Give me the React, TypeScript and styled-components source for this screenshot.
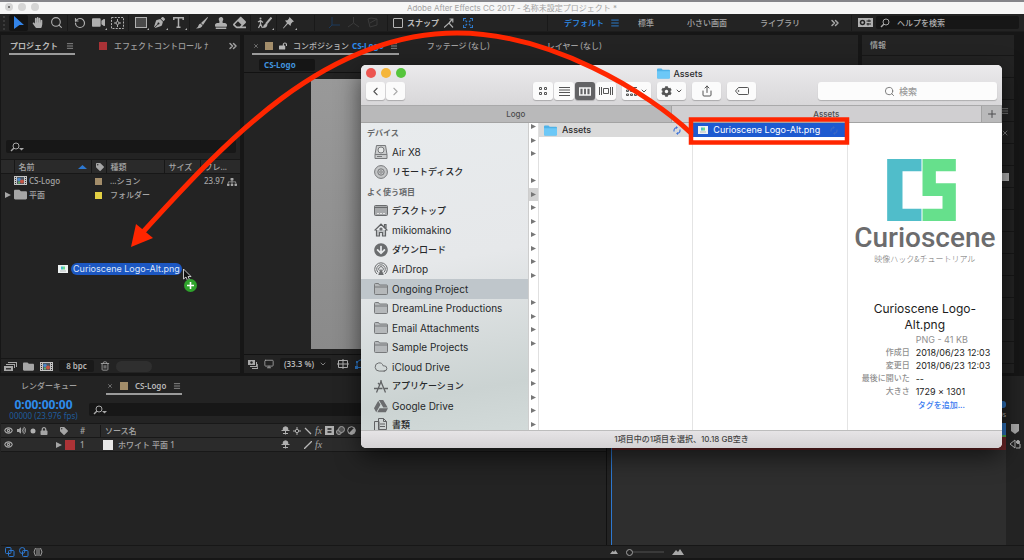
import React from "react";
import styled, { createGlobalStyle, css } from "styled-components";
import {
  FaHandPaper,
  FaVideo,
  FaPenNib,
  FaStamp,
  FaEraser,
  FaTag,
  FaFolder,
  FaLock,
  FaLockOpen,
  FaVolumeUp,
  FaArrowCircleDown,
  FaGoogleDrive,
  FaSitemap,
  FaCog,
} from "react-icons/fa";
import {
  Search,
  RotateCcw,
  ChevronLeft,
  ChevronRight,
  ChevronDown,
  ChevronsRight,
  Share,
  Trash2,
  Monitor,
  Cloud,
  Menu,
  Plus,
  X,
  Eye,
} from "lucide-react";

const UI = `"Noto Sans", "Noto Sans CJK JP", sans-serif`;
const MAC = `Inter, "Noto Sans CJK JP", sans-serif`;

const Global = createGlobalStyle`
  * { box-sizing: border-box; }
  body { margin: 0; background: #161616; }
  button, input { font: inherit; color: inherit; margin: 0; padding: 0; border: 0; background: none; }
  button { display: inline-flex; align-items: center; justify-content: center; }
  input:focus { outline: none; }
  svg { display: block; flex: none; }
  h1, h2, p, ul, dl, dd { margin: 0; padding: 0; }
  ul { list-style: none; }
`;

/* ---------- Application frame ---------- */

const Shell = styled.div`
  position: relative;
  display: flex;
  flex-direction: column;
  height: 100vh;
  min-height: 560px;
  padding-bottom: 2px;
  border-top: 2px solid #85858a;
  background: #161616;
  color: #a6a6a6;
  font: 8px/12px ${UI};
  overflow: hidden;
  white-space: nowrap;
`;

const TitleBar = styled.header`
  position: relative;
  display: flex;
  align-items: center;
  justify-content: center;
  height: 12px;
  flex: none;
  background: #f6f6f6;
  color: #a2a2a2;
  font: 8px/12px ${MAC};
`;

const WindowDots = styled.div`
  position: absolute;
  left: 5px;
  top: 1px;
  display: flex;
  gap: 5px;
`;

const IdleDot = styled.button`
  width: 8px;
  height: 8px;
  border-radius: 50%;
  background: #d5d5d5;
  i {
    width: 2px;
    height: 2px;
    border-radius: 50%;
    background: #555;
  }
`;

const Toolbar = styled.div`
  display: flex;
  align-items: center;
  height: 18px;
  flex: none;
  margin-bottom: 3px;
  padding: 0 5px 0 3px;
  background: #232323;
  border-bottom: 1px solid #1c1c1c;
`;

const Grip = styled.span`
  width: 2px;
  height: 14px;
  margin-right: 4px;
  border-left: 2px dotted #3a3a3a;
`;

const ToolButton = styled.button<{ $active?: boolean; $dim?: boolean; $width?: number; $more?: boolean }>`
  position: relative;
  width: ${(p) => p.$width ?? 19}px;
  height: 16px;
  border-radius: 2px;
  color: ${(p) => (p.$dim ? "#3b3b3b" : "#b0b0b0")};
  background: ${(p) => (p.$active ? "#141414" : "transparent")};
  ${(p) =>
    p.$more &&
    css`
      &::after {
        content: "";
        position: absolute;
        right: 1px;
        bottom: 1px;
        border: 1px solid;
        border-color: transparent #b0b0b0 #b0b0b0 transparent;
      }
    `}
`;

const Divider = styled.span<{ $before?: number; $after?: number }>`
  width: 1px;
  height: 16px;
  margin: 0 ${(p) => p.$after ?? 2}px 0 ${(p) => p.$before ?? 1}px;
  background: #191919;
`;

const SnapLabel = styled.label`
  display: flex;
  align-items: center;
  gap: 4px;
  margin-left: 5px;
  color: #bdbdbd;
  font-weight: 600;
  input {
    appearance: none;
    width: 10px;
    height: 10px;
    border: 1px solid #b5b5b5;
    border-radius: 1px;
  }
`;

const Workspaces = styled.nav`
  display: grid;
  grid-template-columns: 46px 28px 49px 73px 69px auto;
  align-items: center;
  flex: 1;
  padding-left: 16px;
`;

const Workspace = styled.button<{ $on?: boolean }>`
  justify-content: flex-start;
  font-weight: 500;
  color: ${(p) => (p.$on ? "#2d8ceb" : "#a6a6a6")};
`;

const HelpSearch = styled.label`
  display: flex;
  align-items: center;
  gap: 7px;
  width: 143px;
  height: 13px;
  padding-left: 4px;
  border-radius: 2px;
  background: #161616;
  input {
    flex: 1;
    min-width: 0;
    height: 12px;
    font-weight: 500;
  }
  input::placeholder {
    color: #b0b0b0;
    opacity: 1;
  }
`;

const Main = styled.div`
  display: grid;
  grid-template-columns: 239px minmax(0, 1fr) 152px;
  gap: 4px;
  flex: 1;
  min-height: 0;
  padding: 0 10px 0 1px;
  margin-bottom: 3px;
`;

const Panel = styled.section`
  display: flex;
  flex-direction: column;
  min-width: 0;
  background: #232323;
`;

const TabStrip = styled.div`
  display: flex;
  align-items: stretch;
  height: 20px;
  flex: none;
  padding-left: 8px;
`;

const Tab = styled.button<{ $active?: boolean; $gap?: number }>`
  gap: ${(p) => p.$gap ?? 7}px;
  height: 20px;
  padding: 3px 1px 0;
  white-space: pre;
  color: ${(p) => (p.$active ? "#b8b8b8" : "#a0a0a0")};
  font-weight: ${(p) => (p.$active ? 600 : 500)};
  border-bottom: 2px solid ${(p) => (p.$active ? "#9b9b9b" : "transparent")};
  b {
    color: #2d8ceb;
    margin-left: -3px;
  }
`;

const CompTab = styled(Tab)`
  font-weight: 500;
`;

const Swatch = styled.i<{ $color: string; $size?: number }>`
  display: inline-block;
  flex: none;
  width: ${(p) => p.$size ?? 8}px;
  height: ${(p) => p.$size ?? 8}px;
  background: ${(p) => p.$color};
  vertical-align: middle;
`;

/* ---------- Project panel ---------- */

const SearchField = styled.label`
  display: flex;
  align-items: center;
  height: 13px;
  padding-left: 4px;
  background: #171717;
  border-radius: 2px;
  input {
    flex: 1;
    min-width: 0;
    height: 10px;
  }
`;

const ProjectSearch = styled(SearchField)`
  margin: 85px 4px 7px 5px;
`;

const ProjectTable = styled.table`
  width: 100%;
  table-layout: fixed;
  border-collapse: collapse;
  margin-top: -1px;
  th,
  td {
    height: 14px;
    padding: 0 0 0 4px;
    line-height: 12px;
    font-weight: 500;
    text-align: left;
    overflow: hidden;
  }
  th {
    background: #2a2a2a;
    border: solid #171717;
    border-width: 1px 1px 1px 0;
  }
  th:first-child {
    padding: 0;
  }
  td:nth-child(2) {
    padding: 0;
  }
  td:last-child svg {
    display: inline-block;
    vertical-align: middle;
  }
`;

const NameCell = styled.span`
  display: flex;
  align-items: center;
  justify-content: space-between;
  padding-right: 4px;
`;

const ItemName = styled.span`
  display: flex;
  align-items: center;
  gap: 2px;
`;

const PanelFooter = styled.footer`
  display: flex;
  align-items: center;
  height: 15px;
  flex: none;
  margin-top: auto;
  gap: 6px;
  padding-left: 3px;
  border-top: 1px solid #161616;
`;

const ValueButton = styled.button<{ $width: number }>`
  width: ${(p) => p.$width}px;
  height: 12px;
  gap: 5px;
  border-radius: 2px;
  background: #191919;
  color: #b5b5b5;
  font-weight: 600;
`;

const ScrollPill = styled.span`
  width: 36px;
  height: 11px;
  border-radius: 6px;
  background: #2f2f2f;
`;

/* ---------- Composition panel ---------- */

const Crumbs = styled.div`
  height: 18px;
  flex: none;
  padding: 4px 0 0 15px;
  border-bottom: 1px solid #121212;
`;

const Crumb = styled.button`
  justify-content: flex-start;
  width: 56px;
  height: 12px;
  padding-left: 5px;
  border-radius: 2px;
  background: #151515;
  color: #4193dd;
  font-weight: 700;
`;

const Viewer = styled.div`
  flex: 1;
  min-height: 0;
  padding: 6px 67px 5px;
  border-bottom: 1px solid #121212;
`;

const Footage = styled.div`
  height: 100%;
  background: linear-gradient(#999, #8a8a8a);
`;

const CompFooter = styled.footer`
  display: flex;
  align-items: center;
  flex: none;
  height: 18px;
  gap: 6px;
  padding-left: 4px;
`;

/* ---------- Side panels ---------- */

const SideList = styled.div`
  display: grid;
  grid-template-rows: 21px repeat(auto-fill, 22px);
  flex: 1;
`;

const SideTitle = styled.h2`
  padding-left: 8px;
  border-bottom: 1px solid #171717;
  font: 500 8px/20px ${UI};
`;

const SideItem = styled.div`
  display: flex;
  align-items: center;
  justify-content: flex-end;
  padding-right: 5px;
  border-bottom: 1px solid #171717;
`;

/* ---------- Timeline ---------- */

const Timeline = styled.section`
  display: grid;
  grid-template-columns: minmax(0, 1fr) 400px 18px;
  grid-template-rows: 19px 28px minmax(0, 1fr) 13px;
  flex: none;
  height: 182px;
  padding-left: 1px;
  background: #232323;
`;

const TimelineTabs = styled(TabStrip)`
  grid-column: 1 / -1;
  gap: 28px;
  height: 19px;
  padding-left: 19px;
  button {
    height: 19px;
  }
`;

const TimeRow = styled.div`
  display: flex;
  gap: 10px;
  padding: 4px 0 0 7px;
`;

const TimeCode = styled.div`
  width: 71px;
  color: #1f5c9c;
  line-height: 10px;
  text-align: center;
  strong {
    display: block;
    color: #2d8ceb;
    font-size: 12px;
    line-height: 12px;
  }
`;

const TimelineSearch = styled(SearchField)`
  flex: 1;
  margin-top: 4px;
`;

const Ruler = styled.div`
  display: flex;
  flex-direction: column;
  align-items: flex-end;
  font-size: 7px;
  line-height: 14px;
  padding-top: 6px;
  span {
    width: 100%;
    height: 7px;
    border-radius: 3px;
    background: #2d6fb8;
  }
`;

const LayerTable = styled.table`
  align-self: start;
  width: 100%;
  table-layout: fixed;
  border-collapse: collapse;
  th,
  td {
    height: 14px;
    padding: 0;
    font-weight: 500;
    line-height: 12px;
    text-align: left;
    border-bottom: 1px solid #181818;
    background: #2b2b2b;
    overflow: hidden;
  }
  th {
    border-top: 1px solid #181818;
  }
  svg {
    margin: 0 auto;
  }
`;

const LabelCell = styled.span`
  display: flex;
  align-items: center;
  gap: 3px;
  padding-left: 6px;
  svg {
    margin: 0;
  }
`;

const SourceCell = styled.span<{ $sep?: boolean }>`
  display: flex;
  align-items: center;
  gap: 5px;
  padding-left: ${(p) => (p.$sep ? 4 : 2)}px;
  border-left: 1px solid ${(p) => (p.$sep ? "#181818" : "transparent")};
`;

const Tracks = styled.div`
  border-left: 1px solid #111;
  background: #232323;
  padding-left: 4px;
`;

const TrackArea = styled.div`
  height: 100%;
  border-left: 1px solid #2d78d0;
  background: #2e2e2e;
`;

const TrackHead = styled.div`
  height: 14px;
  background: #2d6fb8;
  border-bottom: 2px solid #4aa84a;
`;

const LayerBar = styled.div`
  height: 13px;
  background: #6b2628;
`;

const Gutter = styled.div`
  display: flex;
  flex-direction: column;
  align-items: center;
  gap: 5px;
  padding-top: 1px;
`;

const TimelineFooter = styled.footer`
  display: flex;
  align-items: center;
  gap: 4px;
  padding-left: 4px;
  border-top: 1px solid #171717;
`;

const ZoomSlider = styled.input`
  appearance: none;
  && {
    width: 38px;
    height: 8px;
    margin: 0 4px;
    background: linear-gradient(#3a3a3a, #3a3a3a) center / 100% 2px no-repeat;
  }
  &::-webkit-slider-thumb {
    appearance: none;
    width: 7px;
    height: 7px;
    border: 1px solid #a0a0a0;
    border-radius: 50%;
    background: #232323;
  }
`;

/* ---------- Finder window ---------- */

const FinderFrame = styled.div`
  position: absolute;
  left: 361px;
  right: 22px;
  top: 63px;
  border-radius: 5px;
  box-shadow: 0 8px 24px rgba(0, 0, 0, 0.6);
`;

const Finder = styled.section`
  display: flex;
  flex-direction: column;
  height: 383px;
  border-radius: 5px;
  overflow: hidden;
  background: #fff;
  color: #2b2b2d;
  font: 500 9px/12px ${MAC};
`;

const FinderHead = styled.header`
  height: 41px;
  flex: none;
  padding: 0 5px;
  background: linear-gradient(#ebeaec, #d8d7d9);
  border-bottom: 1px solid #a9a9aa;
`;

const FinderTitle = styled.div`
  display: flex;
  align-items: center;
  justify-content: center;
  position: relative;
  height: 17px;
  gap: 3px;
  padding-right: 3px;
  h1 {
    font: 500 9px/16px ${MAC};
  }
`;

const Lights = styled.div`
  position: absolute;
  left: 0;
  top: 3px;
  display: flex;
  gap: 5px;
`;

const Light = styled.button<{ $color: string }>`
  width: 10px;
  height: 10px;
  border-radius: 50%;
  background: ${(p) => p.$color};
`;

const FinderTools = styled.div`
  display: flex;
  align-items: center;
  gap: 6px;
  height: 18px;
`;

const PushButton = styled.button<{ $on?: boolean; $width?: number }>`
  gap: 3px;
  width: ${(p) => p.$width ?? 29}px;
  height: 18px;
  border-radius: 3px;
  background: ${(p) => (p.$on ? "#636365" : "#fbfbfb")};
  box-shadow: 0 1px 1px rgba(0, 0, 0, 0.22);
  color: ${(p) => (p.$on ? "#f4f4f4" : "#555")};
`;

const Segments = styled.div<{ $left?: number }>`
  display: flex;
  gap: 1px;
  margin-left: ${(p) => p.$left ?? 0}px;
`;

const FinderSearch = styled.label`
  display: flex;
  align-items: center;
  justify-content: center;
  gap: 4px;
  width: 179px;
  height: 18px;
  margin-left: auto;
  border-radius: 3px;
  background: #fcfcfc;
  box-shadow: 0 1px 1px rgba(0, 0, 0, 0.2);
  color: #777;
  input {
    width: 32px;
    height: 14px;
  }
  input::placeholder {
    color: #9b9b9b;
    opacity: 1;
  }
`;

const FinderTabs = styled.div`
  display: grid;
  grid-template-columns: 1fr 1fr 20px;
  height: 17px;
  flex: none;
  border-bottom: 1px solid #a3a3a3;
`;

const FinderTab = styled.button<{ $active?: boolean }>`
  background: ${(p) => (p.$active ? "#d0cfd1" : "#b9b9ba")};
  border-right: 1px solid #a3a3a3;
  color: #4c4c4e;
  font-size: 8px;
`;

const FinderBody = styled.div`
  display: grid;
  grid-template-columns: 168px 10px repeat(3, minmax(0, 1fr));
  flex: 1;
  min-height: 0;
`;

const Sidebar = styled.nav`
  overflow: hidden;
  background: linear-gradient(170deg, #e8ebed, #e6e8ea 45%, #cbd3d2 85%, #d2dad9);
  border-right: 1px solid #cdcdcd;
  h2 {
    padding: 3px 0 2px 6px;
    font: 600 8px/14px ${MAC};
    color: #66686a;
  }
`;

const Places = styled.ul<{ $rows: number; $height: number }>`
  display: grid;
  grid-template-rows: repeat(${(p) => p.$rows}, 1fr);
  height: ${(p) => p.$height}px;
`;

const Place = styled.li<{ $on?: boolean; $latin?: boolean }>`
  display: flex;
  background: ${(p) => (p.$on ? "#bfc6cb" : "transparent")};
  a {
    display: flex;
    align-items: center;
    flex: 1;
    gap: 4px;
    padding-left: 13px;
    color: #26282a;
    text-decoration: none;
    ${(p) => p.$latin && `font: 400 10px/12px Inter, sans-serif;`}
  }
  svg {
    color: #6a6c6e;
  }
`;

const Arrows = styled.div`
  display: flex;
  flex-direction: column;
  justify-content: flex-end;
  overflow: hidden;
  border-right: 1px solid #e0e0e0;
`;

const ArrowGrid = styled.ul`
  display: grid;
  grid-template-rows: repeat(23, 1fr);
  flex: none;
  height: 311px;
  margin-bottom: -1px;
`;

const ArrowRow = styled.li<{ $on?: boolean }>`
  display: flex;
  align-items: center;
  justify-content: center;
  background: ${(p) => (p.$on ? "#d2d2d2" : "transparent")};
  color: #777;
`;

const Column = styled.div`
  border-right: 1px solid #e4e4e4;
`;

const FileRow = styled.button<{ $selected?: boolean }>`
  display: flex;
  justify-content: flex-start;
  width: 100%;
  height: 14px;
  padding: 0 11px 0 5px;
  gap: 5px;
  background: ${(p) => (p.$selected ? "#1d5ad0" : "#dadada")};
  color: ${(p) => (p.$selected ? "#fff" : "#2b2b2d")};
  font-weight: ${(p) => (p.$selected ? 400 : 500)};
  svg:last-child {
    color: ${(p) => (p.$selected ? "#3a68c4" : "#3f74d8")};
  }
`;

const Spring = styled.span`
  flex: 1;
`;

const Preview = styled.article`
  display: flex;
  flex-direction: column;
  align-items: center;
  padding-top: 36px;
  > svg {
    margin-right: 6px;
  }
`;

const Wordmark = styled.p`
  margin-top: 2px;
  color: #6c6c6d;
  font: 500 28px/30px Roboto, sans-serif;
`;

const Tagline = styled.p`
  margin-bottom: 37px;
  color: #6c6c6c;
  font: 300 8px/11px "Noto Sans CJK JP", sans-serif;
`;

const FileTitle = styled.h2`
  white-space: normal;
  width: 120px;
  text-align: center;
  color: #1c1c1c;
  font: 400 12px/16px ${MAC};
`;

const Meta = styled.dl`
  display: grid;
  grid-template-columns: 62px 1fr;
  column-gap: 6px;
  width: 100%;
  font-weight: 400;
  line-height: 13px;
  dt {
    color: #8f8f8f;
    font-size: 8px;
    font-weight: 500;
    text-align: right;
  }
  dd {
    color: #222;
  }
  a {
    padding-left: 2px;
    color: #3a7cf0;
    font-size: 8px;
    font-weight: 500;
    text-decoration: none;
  }
`;

const Kind = styled.dd`
  grid-column: 2;
  && {
    color: #8f8f8f;
  }
`;

const StatusBar = styled.footer`
  height: 18px;
  flex: none;
  border-top: 1px solid #bdbdbd;
  background: linear-gradient(#e6e4e6, #d4d2d4);
  color: #444;
  font: 500 8px/17px ${MAC};
  text-align: center;
`;

/* ---------- Annotations and drag feedback ---------- */

const ArrowLayer = styled.svg`
  position: absolute;
  left: 0;
  top: -2px;
  pointer-events: none;
`;

const DragGhost = styled.div`
  position: absolute;
  left: 58px;
  top: 261px;
  display: flex;
  align-items: center;
  gap: 3px;
  font: 400 9px/12px ${MAC};
  color: #dde6f8;
  span {
    padding: 0 2px;
    border-radius: 6px;
    background: #1c57c2;
  }
`;

const DragCursor = styled.svg`
  position: absolute;
  left: 182px;
  top: 266px;
`;

/* ---------- Drawings ---------- */

const Caret = ({ size = 6 }: { size?: number }) => (
  <svg width={size} height={size} viewBox="0 0 6 6" fill="currentColor">
    <path d="M0 0 L6 3 L0 6Z" />
  </svg>
);

const Finding = ({ menu = true }: { menu?: boolean }) => (
  <svg width={menu ? 15 : 10} height="10" viewBox={menu ? "0 0 15 10" : "0 0 10 10"} fill="none" stroke="#a8a8a8">
    <circle cx="6" cy="4" r="3" />
    <path d="M4 6 L1 9" strokeWidth="1.4" />
    {menu && <path d="M9 6 h5 l-2.500 2.500Z" fill="#a8a8a8" stroke="none" />}
  </svg>
);

const CompIcon = () => (
  <svg width="13" height="9" viewBox="0 0 13 9">
    <rect width="13" height="9" fill="#c4c4c4" />
    <rect x="3" y="1" width="7" height="7" fill="#4b5560" />
    <circle cx="5" cy="3.500" r="1.800" fill="#4a86c8" />
    <circle cx="8" cy="5.500" r="2" fill="#c45544" />
    <rect x="4" y="5.500" width="2" height="2" fill="#62b06a" />
    <path d="M1.500 1 V8 M11.500 1 V8" stroke="#333" strokeDasharray="1 1" />
  </svg>
);

const FootageStack = () => (
  <svg width="13" height="9" viewBox="0 0 13 9" fill="#a8a8a8">
    <path d="M4 0 H13 V5 H12 V1 H4Z M2 2 H11 V6 H10 V3 H2Z" />
    <path d="M0 4 H9 V9 H0Z" />
    <path d="M2 6 H7 V7.500 H2Z" fill="#333" />
  </svg>
);

const Snapshots = () => (
  <svg width="10" height="9" viewBox="0 0 10 9" fill="#a8a8a8">
    <path d="M0 0 H7 V5 H0Z M8 2 H9 V7 H2 V6 H8Z M9.200 4 H10 V9 H4 V8 H9.200Z" />
    <circle cx="3.500" cy="2.500" r="1.200" fill="#232323" />
  </svg>
);

const BlueFolder = () => (
  <svg width="13" height="11" viewBox="0 0 13 11">
    <path d="M0 1.500 Q0 .5 1 .5 H4.500 L5.700 1.700 H12 Q13 1.700 13 2.700 V9.500 Q13 10.500 12 10.500 H1 Q0 10.500 0 9.500Z" fill="#4fb2e8" />
    <path d="M0 3.200 H13 V9.500 Q13 10.500 12 10.500 H1 Q0 10.500 0 9.500Z" fill="#6cc8f7" />
  </svg>
);

const GrayFolder = () => (
  <svg width="14" height="12" viewBox="0 0 14 12" fill="#b5b8ba" stroke="#77797b">
    <path d="M.5 1.500 Q.5 .5 1.500 .5 H4.500 L5.500 2 H12.500 Q13.500 2 13.500 3 V10.500 Q13.500 11.500 12.500 11.500 H1.500 Q.5 11.500 .5 10.500Z M.5 4 H13.500" />
  </svg>
);

const Thumb = () => (
  <svg width="10" height="8" viewBox="0 0 10 8">
    <rect width="10" height="8" fill="#eef2f2" />
    <rect x="3" y="1.500" width="2" height="3" fill="#4bbcc9" />
    <rect x="5" y="1.500" width="2" height="3" fill="#66e08c" />
    <rect x="2" y="5.500" width="6" height="1" fill="#b8bcbc" />
  </svg>
);

const Sync = () => (
  <svg width="8" height="9" viewBox="0 0 8 9" fill="none" stroke="currentColor" strokeWidth="1.200">
    <path d="M1 5.500 V4.500 A3 3 0 0 1 4 1.500 M7 3.500 V4.500 A3 3 0 0 1 4 7.500" />
    <path d="M3 0 L5 1.500 L3 3Z M5 6 L3 7.500 L5 9Z" fill="currentColor" stroke="none" />
  </svg>
);

const Drive = () => (
  <svg width="14" height="14" viewBox="0 0 14 14" fill="#c9cbcc" stroke="#77797b">
    <path d="M2.500 .5 H11.500 L13 9.500 V13.500 H1 V9.500Z M1 9.500 H13" />
    <circle cx="7" cy="5" r="3" fill="#e6e8e8" />
    <path d="M3 11.500 H8" />
  </svg>
);

const Disc = () => (
  <svg width="14" height="14" viewBox="0 0 14 14" fill="#c4c6c7" stroke="#77797b">
    <circle cx="7" cy="7" r="6.400" />
    <circle cx="7" cy="7" r="3.200" />
    <circle cx="7" cy="7" r="1.200" fill="#eee" />
  </svg>
);

const Desktop = () => (
  <svg width="14" height="11" viewBox="0 0 14 11" fill="#a7a9ab" stroke="#696b6d">
    <rect x=".5" y=".5" width="13" height="10" rx="1" />
    <path d="M1 2.500 H13" />
    <path d="M3 8.500 H11" stroke="#e5e5e5" strokeDasharray="2 1" />
  </svg>
);

const House = () => (
  <svg width="14" height="14" viewBox="0 0 14 14" fill="none" stroke="#616365" strokeWidth="1.200">
    <path d="M.6 7.500 L7 1.200 L13.400 7.500 M10.500 4 V1.500 H12 V6" />
    <path d="M2.500 7 V13 H5.500 V9.500 H8.500 V13 H11.500 V7" fill="#c0c3c5" />
    <circle cx="7" cy="6" r="1" />
  </svg>
);

const AirDrop = () => (
  <svg width="14" height="14" viewBox="0 0 14 14" fill="none" stroke="#6a6c6e">
    <path d="M3 12 A6.300 6.300 0 1 1 11 12 M4.200 10.400 A4.300 4.300 0 1 1 9.800 10.400 M5.500 8.700 A2.300 2.300 0 1 1 8.500 8.700" />
    <path d="M7 6.500 L9.800 13 H4.200Z" fill="#6a6c6e" stroke="none" />
  </svg>
);

const Apps = () => (
  <svg width="14" height="13" viewBox="0 0 14 13" fill="none" stroke="#616365" strokeWidth="1.300">
    <path d="M7.500 .5 L2.500 12.500 M6.500 .5 L11.500 12.500 M0 8.500 H8.500 M10.500 8.500 H14 M4 3 L6 5" />
  </svg>
);

const Documents = () => (
  <svg width="14" height="14" viewBox="0 0 14 14" fill="#cdd3d3" stroke="#616365">
    <path d="M.5 3.500 H5 V13.500 H.5Z M4.500 .5 H9.500 L12.500 3.500 V11.500 H4.500Z M9.500 .5 V3.500 H12.500 M6 6 H11 M6 8.500 H11" />
  </svg>
);

const Sun = () => (
  <svg width="8" height="8" viewBox="0 0 8 8" fill="none" stroke="#b0b0b0">
    <circle cx="4" cy="4" r="1.700" />
    <path d="M4 0 V2 M4 6 V8 M0 4 H2 M6 4 H8" />
  </svg>
);

const Shy = () => (
  <svg width="9" height="9" viewBox="0 0 9 9" fill="none" stroke="#b0b0b0">
    <path d="M2 3.500 Q2 .8 4.500 .8 Q7 .8 7 3.500Z" fill="#b0b0b0" />
    <path d="M.5 4.500 H8.500 M4.500 4 V8.500 M2 7.500 H7" />
  </svg>
);

const Slash = ({ flip }: { flip?: boolean }) => (
  <svg width="8" height="8" viewBox="0 0 8 8" stroke="#b8b8b8" strokeWidth="1.300">
    <path d={flip ? "M1 1 L7 7" : "M0 8 L8 0"} />
  </svg>
);

const FxLabel = styled.i`
  display: block;
  text-align: center;
  font: italic 10px/12px "Liberation Serif", serif;
`;

const Film = () => (
  <svg width="9" height="9" viewBox="0 0 9 9" fill="#b0b0b0">
    <path d="M0 0 H9 V9 H0Z" />
    <path d="M2.500 2 H6.500 V4 H2.500Z M2.500 5 H6.500 V7 H2.500Z" fill="#444" />
  </svg>
);

const Blur = () => (
  <svg width="9" height="9" viewBox="0 0 9 9" fill="#555" stroke="#a5a5a5">
    <circle cx="3" cy="6" r="2.500" />
    <circle cx="5.500" cy="3.500" r="3" />
  </svg>
);

const Half = () => (
  <svg width="9" height="9" viewBox="0 0 9 9">
    <circle cx="4.500" cy="4.500" r="3.800" fill="none" stroke="#b0b0b0" />
    <path d="M7.200 1.800 A3.800 3.800 0 0 1 1.800 7.200Z" fill="#b0b0b0" />
  </svg>
);

const Overlap = ({ color, round }: { color: string; round?: boolean }) => (
  <svg width="10" height="10" viewBox="0 0 10 10" fill="none" stroke={color}>
    <rect x=".5" y=".5" width="5.500" height="6" rx={round ? 3 : 1} />
    <rect x="3.500" y="3.500" width="5.500" height="6" rx="1" />
  </svg>
);

const Peak = ({ w }: { w: number }) => (
  <svg width={w} height={w / 2} viewBox="0 0 12 6" fill="#a8a8a8">
    <path d="M0 6 L4 1 L6 3 L8 0 L12 6Z" />
  </svg>
);

const cells = (n: number) => Array.from({ length: n }, (_, i) => i);

const arrowGaps = [3, 12, 17];

const PLACES: { name: string; icon: React.ReactNode; on?: boolean; latin?: boolean }[] = [
  { name: "デスクトップ", icon: <Desktop /> },
  { name: "mikiomakino", icon: <House />, latin: true },
  { name: "ダウンロード", icon: <FaArrowCircleDown size={14} /> },
  { name: "AirDrop", icon: <AirDrop />, latin: true },
  { name: "Ongoing Project", icon: <GrayFolder />, on: true, latin: true },
  { name: "DreamLine Productions", icon: <GrayFolder />, latin: true },
  { name: "Email Attachments", icon: <GrayFolder />, latin: true },
  { name: "Sample Projects", icon: <GrayFolder />, latin: true },
  { name: "iCloud Drive", icon: <Cloud size={14} strokeWidth={1.7} />, latin: true },
  { name: "アプリケーション", icon: <Apps /> },
  { name: "Google Drive", icon: <FaGoogleDrive size={14} />, latin: true },
  { name: "書類", icon: <Documents /> },
];

const SnapSpace = styled.span`
  width: 69px;
`;

function ToolbarRow() {
  return (
    <Toolbar>
      <Grip />
      <ToolButton $active aria-label="Selection">
        <svg width="10" height="13" viewBox="0 0 10 13" fill="#3385ea">
          <path d="M0 0 L10 9 L5.500 9 L0 13Z" />
        </svg>
      </ToolButton>
      <ToolButton aria-label="Hand"><FaHandPaper size={11} /></ToolButton>
      <ToolButton aria-label="Zoom"><Search size={13} strokeWidth={2} /></ToolButton>
      <Divider />
      <ToolButton aria-label="Rotate"><RotateCcw size={12} strokeWidth={2.4} /></ToolButton>
      <ToolButton $more aria-label="Camera"><FaVideo size={13} /></ToolButton>
      <ToolButton aria-label="Pan behind">
        <svg width="13" height="12" viewBox="0 0 13 12" fill="none" stroke="currentColor">
          <rect x=".5" y=".5" width="12" height="11" strokeDasharray="2 1.200" />
          <circle cx="6.500" cy="6" r="1.500" />
          <path d="M6.500 2 V4 M6.500 8 V10 M3 6 H5 M8 6 H10" />
        </svg>
      </ToolButton>
      <Divider />
      <ToolButton $more aria-label="Rectangle">
        <svg width="12" height="11" viewBox="0 0 12 11">
          <rect x=".5" y=".5" width="11" height="10" fill="#4a4a4a" stroke="#b0b0b0" />
        </svg>
      </ToolButton>
      <ToolButton $more aria-label="Pen"><FaPenNib size={11} /></ToolButton>
      <ToolButton $more aria-label="Type">
        <svg width="11" height="11" viewBox="0 0 11 11" fill="none" stroke="currentColor" strokeWidth="1.500">
          <path d="M.8 3 V.8 H10.200 V3 M5.500 .8 V10.200 M3.500 10.200 H7.500" />
        </svg>
      </ToolButton>
      <Divider />
      <ToolButton aria-label="Brush">
        <svg width="12" height="12" viewBox="0 0 12 12" fill="currentColor">
          <path d="M11.500 0 L12 .5 L7 8 L5 6Z M4.500 6.500 L6.500 8.500 Q5.500 11.500 0 11.500 Q2.500 10 2.500 8.500 Q2.800 7 4.500 6.500Z" />
        </svg>
      </ToolButton>
      <ToolButton aria-label="Clone stamp"><FaStamp size={12} /></ToolButton>
      <ToolButton aria-label="Eraser"><FaEraser size={13} /></ToolButton>
      <Divider />
      <ToolButton $more $width={22} aria-label="Roto brush">
        <svg width="15" height="12" viewBox="0 0 15 12" fill="none" stroke="currentColor" strokeWidth="1.300">
          <circle cx="3.500" cy="1.500" r="1" fill="currentColor" stroke="none" />
          <path d="M3.500 3 V7 L1.500 11 M3.500 7 L5.500 11 M1 5 L3.500 3.500 L6 5.500" />
          <path d="M14.500 .5 L9 7" strokeWidth="2" />
          <path d="M9 6.500 Q6 7.500 6 11 Q10 11 10.500 7.500Z" fill="currentColor" stroke="none" />
        </svg>
      </ToolButton>
      <Divider />
      <ToolButton $more aria-label="Puppet pin">
        <svg width="11" height="12" viewBox="0 0 11 12" fill="currentColor">
          <path d="M6.500 0 L11 4.500 L9.500 5 L8 6.800 L7.500 9 L5 6.800 L.5 11.500 L0 11 L4 6 L2 3.500 L4.500 3.200 L6 1.500Z" />
        </svg>
      </ToolButton>
      <Divider $before={16} $after={10} />
      <ToolButton $dim aria-label="Local axis">
        <svg width="11" height="11" viewBox="0 0 11 11" fill="none" stroke="#1d3a5c">
          <path d="M3 0 V8 H11 M3 8 L0 11" />
        </svg>
      </ToolButton>
      <ToolButton $dim aria-label="World axis">
        <svg width="11" height="11" viewBox="0 0 11 11" fill="none" stroke="currentColor">
          <path d="M5.500 0 V6 L0 10 M5.500 6 L11 10" />
        </svg>
      </ToolButton>
      <ToolButton $dim aria-label="View axis">
        <svg width="11" height="11" viewBox="0 0 11 11" fill="none" stroke="currentColor">
          <path d="M1 2 L4 1 L10 2 V8 L3 10 Z M3 6 L10 2" />
        </svg>
      </ToolButton>
      <Divider $before={5} $after={0} />
      <SnapLabel>
        <input type="checkbox" />
        スナップ
      </SnapLabel>
      <ToolButton aria-label="Snap edges">
        <svg width="10" height="10" viewBox="0 0 10 10" fill="none" stroke="currentColor" strokeWidth="1.200">
          <path d="M0 9.500 L5 5 L9 9.500 M5 5 L8 1.500 M5.500 1 H8.800 V4.500" />
        </svg>
      </ToolButton>
      <ToolButton aria-label="Snap features">
        <svg width="10" height="10" viewBox="0 0 10 10" fill="none" stroke="#2d78c8" strokeWidth="1.200">
          <path d="M.5 3 V.5 H3 M7 .5 H9.500 V3 M9.500 7 V9.500 H7 M3 9.500 H.5 V7 M2.500 2.500 L4 4 M7.500 2.500 L6 4 M2.500 7.500 L4 6 M7.500 7.500 L6 6" />
        </svg>
      </ToolButton>
      <SnapSpace />
      <Divider $after={0} />
      <Workspaces>
        <Workspace $on>デフォルト</Workspace>
        <Workspace $on aria-label="Workspace menu"><Menu size={10} strokeWidth={2} /></Workspace>
        <Workspace>標準</Workspace>
        <Workspace>小さい画面</Workspace>
        <Workspace>ライブラリ</Workspace>
        <Workspace aria-label="More workspaces"><ChevronsRight size={12} strokeWidth={3} /></Workspace>
      </Workspaces>
      <Divider />
      <ToolButton $width={22} aria-label="Sync settings">
        <svg width="15" height="9" viewBox="0 0 15 9">
          <rect width="15" height="9" fill="#b0b0b0" />
          <circle cx="4.500" cy="4.500" r="2" fill="none" stroke="#222" strokeWidth="1.500" />
          <path d="M8.500 3 H13 M8.500 6 H13 M11 1.500 V4 M10 5 V7.500" stroke="#222" />
        </svg>
      </ToolButton>
      <HelpSearch>
        <Finding menu={false} />
        <input aria-label="ヘルプを検索" placeholder="ヘルプを検索" />
      </HelpSearch>
    </Toolbar>
  );
}

const EffectTab = styled(Tab)`
  justify-content: flex-start;
  width: 113px;
  margin: 0 17px 0 23px;
`;

function ProjectPanel() {
  return (
    <Panel>
      <TabStrip>
        <Tab $active $gap={6}>
          プロジェクト <Menu size={8} />
        </Tab>
        <EffectTab>
          <Swatch $color="#a93236" />
          エフェクトコントロール ﾅ
        </EffectTab>
        <Tab aria-label="More panels"><ChevronsRight size={12} strokeWidth={3} /></Tab>
      </TabStrip>
      <ProjectSearch>
        <Finding />
        <input aria-label="Search project" />
      </ProjectSearch>
      <ProjectTable>
        <colgroup>
          <col width="13" />
          <col width="77" />
          <col width="15" />
          <col width="58" />
          <col width="36" />
          <col width="40" />
        </colgroup>
        <thead>
          <tr>
            <th />
            <th>
              <NameCell>
                名前
                <svg width="9" height="4" viewBox="0 0 9 4" fill="#2d78d0">
                  <path d="M0 4 L4.500 0 L9 4Z" />
                </svg>
              </NameCell>
            </th>
            <th><FaTag size={8} /></th>
            <th>種類</th>
            <th>サイズ</th>
            <th>フレ...</th>
          </tr>
        </thead>
        <tbody>
          <tr>
            <td />
            <td><ItemName><CompIcon />CS-Logo</ItemName></td>
            <td><Swatch $color="#a38d6a" $size={7} /></td>
            <td>...ション</td>
            <td />
            <td>23.97 <FaSitemap size={10} /></td>
          </tr>
          <tr>
            <td><Caret /></td>
            <td><ItemName><FaFolder size={13} />平面</ItemName></td>
            <td><Swatch $color="#e2cf43" $size={7} /></td>
            <td>フォルダー</td>
            <td />
            <td />
          </tr>
        </tbody>
      </ProjectTable>
      <PanelFooter>
        <FootageStack />
        <FaFolder size={11} />
        <CompIcon />
        <ValueButton $width={35}>8 bpc</ValueButton>
        <Trash2 size={10} />
        <ScrollPill />
      </PanelFooter>
    </Panel>
  );
}

const OtherTab = styled(Tab)`
  margin-left: 27px;
  width: 93px;
  justify-content: flex-start;
`;

function CompPanel() {
  return (
    <Panel>
      <TabStrip>
        <CompTab $active $gap={6}>
          <X size={6} />
          <Swatch $color="#a38d6a" />
          <FaLockOpen size={8} />
          コンポジション
          <b>CS-Logo</b>
          <Menu size={8} />
        </CompTab>
        <OtherTab>フッテージ (なし)</OtherTab>
        <OtherTab>レイヤー (なし)</OtherTab>
      </TabStrip>
      <Crumbs>
        <Crumb>CS-Logo</Crumb>
      </Crumbs>
      <Viewer>
        <Footage />
      </Viewer>
      <CompFooter>
        <Snapshots />
        <Monitor size={10} />
        <ValueButton $width={51}>
          (33.3 %) <ChevronDown size={8} />
        </ValueButton>
        <svg width="12" height="11" viewBox="0 0 12 11" fill="none" stroke="#b0b0b0">
          <path d="M1.500 1.500 H10.500 V8.500 H1.500Z M6 0 V10 M0 5 H12" />
        </svg>
        <svg width="12" height="10" viewBox="0 0 12 10" fill="none" stroke="#2d78c8">
          <path d="M1 8.500 H12 M2 8 V3 L5 1 H12" />
          <path d="M0 7 h3 v3 h-3Z M1 2 h2 v2 h-2Z" fill="#2d78c8" stroke="none" />
        </svg>
      </CompFooter>
    </Panel>
  );
}

function SidePanel() {
  return (
    <Panel>
      <SideList>
        <SideTitle>情報</SideTitle>
        <SideItem />
        <SideItem />
        <SideItem><Menu size={8} /></SideItem>
        <SideItem><X size={8} /></SideItem>
        <SideItem />
        <SideItem><Swatch $color="#b4b4b4" /></SideItem>
        {cells(8).map((i) => (
          <SideItem key={i} />
        ))}
      </SideList>
    </Panel>
  );
}

function TimelinePanel() {
  return (
    <Timeline>
      <TimelineTabs>
        <Tab>レンダーキュー</Tab>
        <Tab $active>
          <X size={6} />
          <Swatch $color="#a38d6a" />
          CS-Logo
          <Menu size={8} />
        </Tab>
      </TimelineTabs>
      <TimeRow>
        <TimeCode>
          <strong>0:00:00:00</strong>
          00000 (23.976 fps)
        </TimeCode>
        <TimelineSearch>
          <Finding />
          <input aria-label="Search timeline" />
        </TimelineSearch>
      </TimeRow>
      <Ruler>
        <span />
        10s
      </Ruler>
      <div />
      <LayerTable>
        <colgroup>
          <col width="14" />
          <col width="12" />
          <col width="11" />
          <col width="12" />
          <col width="28" />
          <col width="22" />
          <col width="180" />
          {cells(7).map((i) => (
            <col key={i} width="11" />
          ))}
          <col />
        </colgroup>
        <thead>
          <tr>
            <th><Eye size={9} strokeWidth={3} /></th>
            <th><FaVolumeUp size={9} /></th>
            <th>
              <svg width="6" height="6" viewBox="0 0 6 6" fill="#b0b0b0">
                <circle cx="3" cy="3" r="2.500" />
              </svg>
            </th>
            <th><FaLock size={8} /></th>
            <th><FaTag size={8} /></th>
            <th>&nbsp;#</th>
            <th><SourceCell $sep>ソース名</SourceCell></th>
            <th><Shy /></th>
            <th><Sun /></th>
            <th><Slash flip /></th>
            <th><FxLabel>fx</FxLabel></th>
            <th><Film /></th>
            <th><Blur /></th>
            <th><Half /></th>
            <th />
          </tr>
        </thead>
        <tbody>
          <tr>
            <td><Eye size={9} strokeWidth={3} /></td>
            <td />
            <td />
            <td />
            <td>
              <LabelCell>
                <Caret />
                <Swatch $color="#ac3336" $size={10} />
              </LabelCell>
            </td>
            <td>&nbsp;1</td>
            <td>
              <SourceCell>
                <Swatch $color="#e8e8e8" $size={10} />
                ホワイト 平面 1
              </SourceCell>
            </td>
            <td><Shy /></td>
            <td />
            <td><Slash /></td>
            <td><FxLabel>fx</FxLabel></td>
            <td />
            <td />
            <td />
            <td />
          </tr>
        </tbody>
      </LayerTable>
      <Tracks>
        <TrackArea>
          <TrackHead />
          <LayerBar />
        </TrackArea>
      </Tracks>
      <Gutter>
        <svg width="8" height="10" viewBox="0 0 8 10" fill="#a8a8a8">
          <path d="M0 0 H8 V7 L4 10 L0 7Z" />
        </svg>
        <svg width="11" height="10" viewBox="0 0 11 10" fill="none" stroke="#b0b0b0">
          <path d="M0 5 L5 1 V9Z M6 3 L10 5 V9 H6" />
          <circle cx="8" cy="3" r="1.500" fill="#b0b0b0" />
        </svg>
      </Gutter>
      <TimelineFooter>
        <Overlap color="#2d78d0" />
        <Overlap color="#2d78d0" round />
        <svg width="10" height="10" viewBox="0 0 10 10" fill="none" stroke="#a0a0a0">
          <path d="M2.500 1 L1 5 L2.500 9 M7.500 1 L9 5 L7.500 9 M4 1 V9 M6 1 V9" />
        </svg>
      </TimelineFooter>
      <TimelineFooter>
        <Peak w={8} />
        <ZoomSlider type="range" defaultValue={0} aria-label="Timeline zoom" />
        <Peak w={12} />
      </TimelineFooter>
      <TimelineFooter />
    </Timeline>
  );
}

function FinderWindow() {
  return (
    <FinderFrame>
      <Finder>
        <FinderHead>
          <FinderTitle>
            <Lights>
              <Light $color="#ec5550" aria-label="Close" />
              <Light $color="#f5b63a" aria-label="Minimise" />
              <Light $color="#56c53c" aria-label="Zoom window" />
            </Lights>
            <BlueFolder />
            <h1>Assets</h1>
          </FinderTitle>
          <FinderTools>
            <Segments>
              <PushButton $width={19} aria-label="Back"><ChevronLeft size={13} /></PushButton>
              <PushButton $width={19} aria-label="Forward"><ChevronRight size={13} color="#aaa" /></PushButton>
            </Segments>
            <Segments $left={122}>
              <PushButton $width={20} aria-label="Icons">
                <svg width="8" height="8" viewBox="0 0 8 8" fill="none" stroke="currentColor">
                  <path d="M.5 .5 H2.500 V2.500 H.5Z M5.500 .5 H7.500 V2.500 H5.500Z M.5 5.500 H2.500 V7.500 H.5Z M5.500 5.500 H7.500 V7.500 H5.500Z" />
                </svg>
              </PushButton>
              <PushButton $width={20} aria-label="List">
                <svg width="11" height="9" viewBox="0 0 11 9" stroke="currentColor">
                  <path d="M0 .5 H11 M0 3 H11 M0 5.500 H11 M0 8.500 H11" />
                </svg>
              </PushButton>
              <PushButton $on $width={20} aria-label="Columns">
                <svg width="12" height="9" viewBox="0 0 12 9" fill="none" stroke="currentColor" strokeWidth="1.500">
                  <path d="M.7 1 H11.300 V8 H.7Z M4.300 1 V8 M7.700 1 V8" />
                </svg>
              </PushButton>
              <PushButton $width={20} aria-label="Gallery">
                <svg width="14" height="8" viewBox="0 0 14 8" fill="none" stroke="currentColor">
                  <path d="M.5 0 V8 M2.500 0 V8 M4.500 1.500 H9.500 V6.500 H4.500Z M11.500 0 V8 M13.500 0 V8" />
                </svg>
              </PushButton>
            </Segments>
            <PushButton aria-label="Arrange">
              <svg width="11" height="9" viewBox="0 0 11 9" fill="none" stroke="currentColor">
                <path d="M0 .5 H11 M.5 3 H2.500 V4.500 H.5Z M4.500 3 H6.500 V4.500 H4.500Z M8.500 3 H10.500 V4.500 H8.500Z M.5 7 H2.500 V8.500 H.5Z M4.500 7 H6.500 V8.500 H4.500Z M8.500 7 H10.500 V8.500 H8.500Z" />
              </svg>
              <ChevronDown size={8} strokeWidth={3} />
            </PushButton>
            <PushButton aria-label="Action">
              <FaCog size={11} />
              <ChevronDown size={8} strokeWidth={3} />
            </PushButton>
            <PushButton aria-label="Share"><Share size={12} /></PushButton>
            <PushButton aria-label="Tags">
              <svg width="14" height="8" viewBox="0 0 14 8" fill="none" stroke="currentColor">
                <path d="M3.500 .5 H12.500 Q13.500 .5 13.500 1.500 V6.500 Q13.500 7.500 12.500 7.500 H3.500 L.5 4Z" />
                <circle cx="3.500" cy="4" r=".5" />
              </svg>
            </PushButton>
            <FinderSearch>
              <Search size={11} />
              <input aria-label="検索" placeholder="検索" />
            </FinderSearch>
          </FinderTools>
        </FinderHead>
        <FinderTabs>
          <FinderTab>Logo</FinderTab>
          <FinderTab $active>Assets</FinderTab>
          <FinderTab aria-label="New tab"><Plus size={12} /></FinderTab>
        </FinderTabs>
        <FinderBody>
          <Sidebar>
            <h2>デバイス</h2>
            <Places $rows={2} $height={40}>
              <Place $latin><a href="#air"><Drive />Air X8</a></Place>
              <Place><a href="#remote"><Disc />リモートディスク</a></Place>
            </Places>
            <h2>よく使う項目</h2>
            <Places $rows={12} $height={234}>
              {PLACES.map((p) => (
                <Place key={p.name} $on={p.on} $latin={p.latin}>
                  <a href={"#" + p.name}>
                    {p.icon}
                    {p.name}
                  </a>
                </Place>
              ))}
            </Places>
          </Sidebar>
          <Arrows>
            <ArrowGrid>
              {cells(23).map((i) => (
                <ArrowRow key={i} $on={i === 5}>
                  {!arrowGaps.includes(i) && <Caret size={5} />}
                </ArrowRow>
              ))}
            </ArrowGrid>
          </Arrows>
          <Column>
            <FileRow>
              <BlueFolder />
              Assets
              <Spring />
              <Sync />
            </FileRow>
          </Column>
          <Column>
            <FileRow $selected>
              <Thumb />
              Curioscene Logo-Alt.png
              <Spring />
              <Sync />
            </FileRow>
          </Column>
          <Preview>
            <svg width="69" height="62" viewBox="142 57 206 186">
              <path d="M142 57 H245 V94 H188 V206 H245 V243 H142Z" fill="#50bdca" />
              <path d="M248 57 H348 V94 H288 V130 H348 V243 H248 V206 H308 V168 H248Z" fill="#66e08c" />
            </svg>
            <Wordmark>Curioscene</Wordmark>
            <Tagline>映像ハック&amp;チュートリアル</Tagline>
            <FileTitle>Curioscene Logo-Alt.png</FileTitle>
            <Meta>
              <Kind>PNG - 41 KB</Kind>
              <dt>作成日</dt>
              <dd>2018/06/23 12:03</dd>
              <dt>変更日</dt>
              <dd>2018/06/23 12:03</dd>
              <dt>最後に開いた</dt>
              <dd>--</dd>
              <dt>大きさ</dt>
              <dd>1729 × 1301</dd>
              <Kind><a href="#tags">タグを追加...</a></Kind>
            </Meta>
          </Preview>
        </FinderBody>
        <StatusBar>1項目中の1項目を選択、10.18 GB空き</StatusBar>
      </Finder>
    </FinderFrame>
  );
}

export default function App() {
  return (
    <>
      <Global />
      <Shell>
        <TitleBar>
          <WindowDots>
            <IdleDot aria-label="Close"><i /></IdleDot>
            <IdleDot aria-label="Minimise" />
            <IdleDot aria-label="Zoom window" />
          </WindowDots>
          Adobe After Effects CC 2017 - 名称未設定プロジェクト *
        </TitleBar>
        <ToolbarRow />
        <Main>
          <ProjectPanel />
          <CompPanel />
          <SidePanel />
        </Main>
        <TimelinePanel />
        <FinderWindow />
        <ArrowLayer width="1024" height="560" viewBox="0 0 1024 560" fill="none" stroke="#ff2600">
          <path d="M143 232 C226 141 325 33 457 33 C550 33 648 92 692 134" strokeWidth="5" />
          <path d="M131 247 L136 224 L153 238Z" fill="#ff2600" stroke="none" />
          <rect x="691" y="119.500" width="156" height="23" strokeWidth="4.500" />
        </ArrowLayer>
        <DragGhost>
          <Thumb />
          <span>Curioscene Logo-Alt.png</span>
        </DragGhost>
        <DragCursor width="16" height="24" viewBox="0 0 16 24">
          <path d="M1.500 1 V11 L4 9 L5.500 12.500 L7.500 11.500 L6 8.500 H9Z" fill="#111" stroke="#eee" strokeWidth=".8" />
          <circle cx="8.500" cy="17.500" r="6.500" fill="#2fa32c" />
          <path d="M8.500 14 V21 M5 17.500 H12" stroke="#fff" strokeWidth="1.600" />
        </DragCursor>
      </Shell>
    </>
  );
}
